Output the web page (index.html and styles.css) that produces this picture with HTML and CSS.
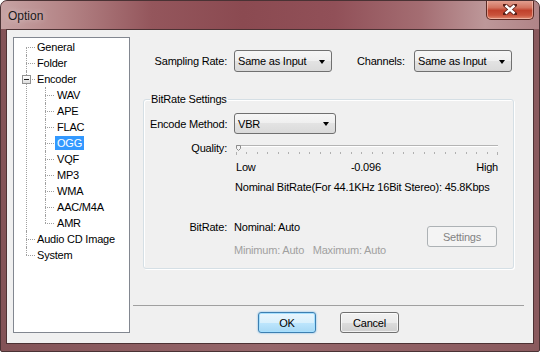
FILE: index.html
```html
<!DOCTYPE html>
<html lang="en">
<head>
    <meta charset="UTF-8">
    <title>Option</title>
    <link rel="stylesheet" href="styles.css">
</head>
<body>
    <div class="window">
        <div class="titlebar">
            <span class="title">Option</span>
            <button class="close-btn">
                <svg width="14" height="11" viewBox="0 0 14 11">
                    <path d="M2 1 L12 10 M12 1 L2 10" stroke="#5a2018" stroke-width="4" stroke-linecap="square"/>
                    <path d="M2.5 1.5 L11.5 9.5 M11.5 1.5 L2.5 9.5" stroke="#fff" stroke-width="2.4"/>
                </svg>
            </button>
        </div>

        <div class="client">
            <div class="tree">
                <ul class="tree-root">
                    <li><span class="node">General</span></li>
                    <li><span class="node">Folder</span></li>
                    <li>
                        <i class="expander"></i><span class="node">Encoder</span>
                        <ul class="tree-children">
                            <li><span class="node">WAV</span></li>
                            <li><span class="node">APE</span></li>
                            <li><span class="node">FLAC</span></li>
                            <li><span class="node selected">OGG</span></li>
                            <li><span class="node">VQF</span></li>
                            <li><span class="node">MP3</span></li>
                            <li><span class="node">WMA</span></li>
                            <li><span class="node">AAC/M4A</span></li>
                            <li><span class="node">AMR</span></li>
                        </ul>
                    </li>
                    <li><span class="node">Audio CD Image</span></li>
                    <li><span class="node">System</span></li>
                </ul>
            </div>

            <div class="panel">
                <div class="settings">
                    <div class="top-row">
                        <span class="label">Sampling Rate:</span>
                        <div class="combo">Same as Input</div>
                        <span class="channels-label">Channels:</span>
                        <div class="combo">Same as Input</div>
                    </div>

                    <fieldset class="group">
                        <legend>BitRate Settings</legend>

                        <div class="gb-row">
                            <span class="gb-label">Encode Method:</span>
                            <div class="combo combo-method">VBR</div>
                        </div>

                        <div class="gb-row quality-row">
                            <span class="gb-label">Quality:</span>
                            <svg class="slider" width="264" height="16" viewBox="0 0 264 16">
                                <rect x="2" y="5" width="262" height="1" fill="#b4b4b4"/>
                                <rect x="2" y="6" width="262" height="1" fill="#fff"/>
                                <g id="ticks" fill="#b0b0b0"></g>
                                <path d="M2.5 5.5 h4 v3 l-2 2 l-2 -2 z" fill="#f4f4f4" stroke="#8c8c8c"/>
                            </svg>
                        </div>

                        <div class="scale-row">
                            <span>Low</span>
                            <span>-0.096</span>
                            <span>High</span>
                        </div>

                        <div class="nominal-row">Nominal BitRate(For 44.1KHz 16Bit Stereo): 45.8Kbps</div>

                        <div class="bitrate-block">
                            <span class="gb-label">BitRate:</span>
                            <div class="bitrate-values">
                                <div>Nominal: Auto</div>
                                <div class="muted">Minimum: Auto&nbsp;&nbsp; Maximum: Auto</div>
                            </div>
                            <button class="btn btn-disabled">Settings</button>
                        </div>
                    </fieldset>
                </div>

                <div class="footer">
                    <button class="btn btn-default">OK</button>
                    <button class="btn">Cancel</button>
                </div>
            </div>
        </div>
    </div>

    <script>
        // tick marks under the quality slider
        const ticks = document.getElementById("ticks");
        const count = 25;
        for (let i = 0; i <= count; i++) {
            const x = Math.round(2 + i * 261 / count);
            const tick = document.createElementNS("http://www.w3.org/2000/svg", "rect");
            tick.setAttribute("x", x);
            tick.setAttribute("y", 12);
            tick.setAttribute("width", 1);
            tick.setAttribute("height", i === 0 || i === count ? 3 : 2);
            ticks.appendChild(tick);
        }
    </script>
</body>
</html>
```

FILE: styles.css
```css
body {
    margin: 0;
    font-family: "Liberation Sans", Arial, sans-serif;
    font-size: 11px;
    letter-spacing: -0.2px;
    color: #000;
    background: #fff;
}
ul {
    list-style: none;
    margin: 0;
    padding: 0;
}
.window {
    width: 540px;
    height: 352px;
    box-sizing: border-box;
    display: flex;
    flex-direction: column;
    padding: 0 5px 7px;
    background: linear-gradient(90deg, #835357 0%, #96676b 50%, #8a5a5e 100%);
    border: 1px solid #4a3234;
    border-radius: 7px 7px 2px 2px;
    overflow: hidden;
}
.titlebar {
    height: 28px;
    margin: 0 -5px;
    display: flex;
    align-items: flex-start;
    background: linear-gradient(90deg, #c7a3a4 0%, #b48486 12%, #94565c 28%, #8b4a51 45%, #915058 62%, #a46d72 78%, #bd9799 90%, #b08487 100%);
}
.title {
    margin: 8px 0 0 7px;
    font-size: 12px;
    letter-spacing: 0;
    color: #1a1a1a;
    text-shadow: 0 0 6px rgba(255, 255, 255, 0.6);
}
.close-btn {
    margin: -1px 5px 0 auto;
    width: 48px;
    height: 20px;
    padding: 0;
    display: flex;
    align-items: center;
    justify-content: center;
    border: 1px solid #5b2a24;
    border-top: none;
    border-radius: 0 0 5px 5px;
    background: linear-gradient(#e4a596 0%, #d27460 40%, #c0412c 55%, #c9533c 80%, #e08a70 100%);
    box-shadow: inset 0 0 0 1px rgba(255, 220, 210, 0.5);
}
.client {
    flex: 1;
    display: flex;
    background: #f0f0f0;
    border: 1px solid #4d3234;
}

/* tree view */
.tree {
    width: 117px;
    margin: 7px 0 10px 6px;
    box-sizing: border-box;
    padding-top: 1px;
    background: #fff;
    border: 1px solid #828790;
}
.tree li {
    position: relative;
}
.tree li::before {
    content: "";
    position: absolute;
    top: 8px;
    width: 9px;
    border-top: 1px dotted #a0a0a0;
}
.tree li::after {
    content: "";
    position: absolute;
    top: 0;
    bottom: 0;
    border-left: 1px dotted #a0a0a0;
}
.tree-root > li {
    padding-left: 21px;
}
.tree-root > li::before,
.tree-root > li::after {
    left: 12px;
}
.tree-root > li:first-child::after {
    top: 8px;
}
.tree li:last-child::after {
    bottom: auto;
    height: 8px;
}
.tree-children > li {
    padding-left: 20px;
}
.tree-children > li::before,
.tree-children > li::after {
    left: 10px;
}
.node {
    display: inline-block;
    height: 16px;
    line-height: 16px;
    padding: 0 2px;
    white-space: nowrap;
}
.node.selected {
    height: 14px;
    line-height: 14px;
    margin: 1px 0;
    vertical-align: top;
    background: #3399ff;
    color: #fff;
}
.expander {
    position: absolute;
    left: 8px;
    top: 4px;
    width: 9px;
    height: 9px;
    box-sizing: border-box;
    border: 1px solid #919191;
    background: linear-gradient(#fff, #dedede);
    z-index: 1;
}
.expander::after {
    content: "";
    position: absolute;
    left: 1px;
    top: 3px;
    width: 5px;
    height: 1px;
    background: #1e1e1e;
}

/* right side */
.panel {
    flex: 1;
    display: flex;
    flex-direction: column;
    margin: 0 9px 0 3px;
}
.settings {
    flex: 1;
    padding-top: 20px;
}
.top-row {
    display: flex;
    align-items: center;
    height: 22px;
}
.label {
    width: 94px;
    margin-right: 7px;
    text-align: right;
    white-space: nowrap;
}
.channels-label {
    width: 57px;
    margin-left: 25px;
}
.combo {
    width: 98px;
    height: 22px;
    box-sizing: border-box;
    display: flex;
    align-items: center;
    padding-left: 3px;
    border: 1px solid #707070;
    border-radius: 3px;
    background: linear-gradient(#f6f6f6 0%, #efefef 50%, #e3e3e3 50%, #dadada 100%);
    white-space: nowrap;
}
.combo::after {
    content: "";
    margin: 1px 6px 0 auto;
    border-left: 3.5px solid transparent;
    border-right: 3.5px solid transparent;
    border-top: 4px solid #000;
}
.combo-method {
    width: 102px;
    height: 21px;
}
.group {
    margin: 21px 10px 0 10px;
    padding: 7px 6px 11px;
    border: 1px solid #d5dfe5;
    border-radius: 3px;
    box-shadow: inset 1px 1px #fff, 1px 1px #fff;
}
.group legend {
    padding: 0 1px;
    line-height: 13px;
}
.gb-row {
    display: flex;
    align-items: center;
    height: 21px;
}
.gb-label {
    width: 77px;
    margin-right: 7px;
    text-align: right;
    white-space: nowrap;
    flex-shrink: 0;
}
.quality-row {
    height: 16px;
    margin-top: 6px;
}
.slider {
    display: block;
}
.scale-row {
    display: flex;
    justify-content: space-between;
    width: 262px;
    height: 14px;
    line-height: 14px;
    margin: 4px 0 0 86px;
}
.nominal-row {
    height: 14px;
    line-height: 14px;
    margin: 6px 0 0 85px;
    white-space: nowrap;
}
.bitrate-block {
    display: flex;
    align-items: flex-start;
    margin-top: 26px;
    line-height: 14px;
}
.bitrate-values div + div {
    margin-top: 9px;
}
.muted {
    color: #a0a0a0;
}
.bitrate-block .btn {
    margin: 6px 10px 0 auto;
    width: 70px;
}
.btn {
    height: 21px;
    width: 58px;
    padding: 0;
    font: inherit;
    letter-spacing: inherit;
    color: #000;
    border: 1px solid #707070;
    border-radius: 3px;
    background: linear-gradient(#f2f2f2 0%, #ebebeb 50%, #dddddd 50%, #cfcfcf 100%);
    box-shadow: inset 0 0 0 1px rgba(255, 255, 255, 0.7);
}
.btn-default {
    border-color: #3c7fb1;
    background: linear-gradient(#eaf6fd 0%, #d9f0fc 50%, #bee6fd 50%, #a7d9f5 100%);
    box-shadow: inset 0 0 0 1px #a6e0ff, 0 0 2px #60b0e8;
}
.btn-disabled {
    color: #838383;
    border-color: #adb2b5;
    background: #f4f4f4;
    box-shadow: none;
}
.footer {
    display: flex;
    justify-content: center;
    gap: 24px;
    padding: 6px 0 10px;
    border-top: 1px solid #a0a0a0;
}
.footer .btn + .btn {
    width: 59px;
}
```
